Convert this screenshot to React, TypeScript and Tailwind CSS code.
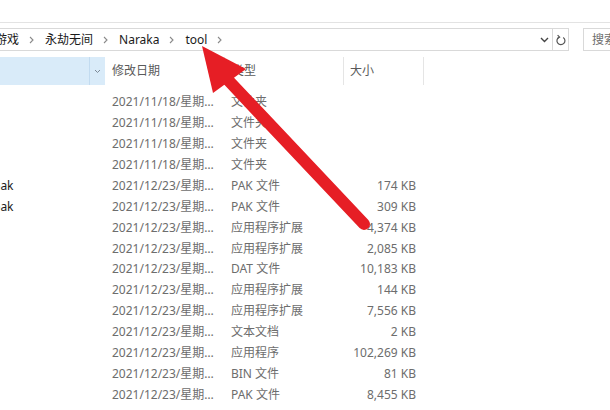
import React from "react";

const Chevron = () => (
  <svg width="5" height="8" viewBox="0 0 5 8" className="block">
    <path d="M1 1 L4 4 L1 7" fill="none" stroke="#8a8a8a" strokeWidth="1.1" />
  </svg>
);

const rows: [string, string, string, string][] = [
  ["", "2021/11/18/星期…", "文件夹", ""],
  ["", "2021/11/18/星期…", "文件夹", ""],
  ["", "2021/11/18/星期…", "文件夹", ""],
  ["", "2021/11/18/星期…", "文件夹", ""],
  ["pak", "2021/12/23/星期…", "PAK 文件", "174 KB"],
  ["pak", "2021/12/23/星期…", "PAK 文件", "309 KB"],
  ["", "2021/12/23/星期…", "应用程序扩展", "4,374 KB"],
  ["", "2021/12/23/星期…", "应用程序扩展", "2,085 KB"],
  ["", "2021/12/23/星期…", "DAT 文件", "10,183 KB"],
  ["", "2021/12/23/星期…", "应用程序扩展", "144 KB"],
  ["", "2021/12/23/星期…", "应用程序扩展", "7,556 KB"],
  ["", "2021/12/23/星期…", "文本文档", "2 KB"],
  ["", "2021/12/23/星期…", "应用程序", "102,269 KB"],
  ["", "2021/12/23/星期…", "BIN 文件", "81 KB"],
  ["", "2021/12/23/星期…", "PAK 文件", "8,455 KB"],
];

const crumbs = ["游戏", "永劫无间", "Naraka", "tool"];

export default function App() {
  return (
    <div
      className="relative w-[610px] h-[410px] overflow-hidden bg-white text-[12px]"
      style={{ fontFamily: '"Noto Sans", "Noto Sans CJK SC", sans-serif' }}
    >
      <div className="h-[23px] border-b border-[#e3e3e3]" />
      <div className="mt-[5px] flex h-[23px] items-stretch">
        <div className="ml-[-2px] flex w-[571px] shrink-0 items-stretch border border-[#d9d9d9]">
          <div className="flex flex-1 items-center overflow-hidden text-[#1a1a1a] leading-none">
            {crumbs.map((c, i) => (
              <React.Fragment key={c}>
                <span className={i === 0 ? "ml-[-4px] whitespace-nowrap" : "whitespace-nowrap"}>{c}</span>
                <span className="pl-[10px] pr-[11px]">
                  <Chevron />
                </span>
              </React.Fragment>
            ))}
          </div>
          <div className="flex w-[15px] items-center justify-center">
            <svg width="9" height="6" viewBox="0 0 9 6">
              <path d="M1 1 L4.5 4.5 L8 1" fill="none" stroke="#444" strokeWidth="1.4" />
            </svg>
          </div>
          <div className="flex w-[16px] items-center justify-center border-l border-[#d9d9d9]">
            <svg width="10" height="12" viewBox="0 0 10 12">
              <path d="M3 3.2 A4 4 0 1 0 7.2 3.4" fill="none" stroke="#555" strokeWidth="1.2" />
              <path d="M1.6 1.2 L3.6 3.2 L1.4 4.6" fill="none" stroke="#555" strokeWidth="1.2" />
            </svg>
          </div>
        </div>
        <div className="ml-[14px] flex w-[80px] shrink-0 items-center overflow-hidden border border-[#d9d9d9] pl-[8px] text-[#6d6d6d] whitespace-nowrap">
          搜索"tool"
        </div>
      </div>
      <div className="mt-[6px] flex h-[28px] items-stretch text-[#5a5a5a]">
        <div className="flex w-[105px] bg-[#d9ebf9]">
          <div className="w-[90px] border-r border-[#c2dbf0]" />
          <div className="flex flex-1 items-center justify-center">
            <svg width="7" height="5" viewBox="0 0 7 5">
              <path d="M1 1 L3.5 3.5 L6 1" fill="none" stroke="#7d8a97" strokeWidth="1" />
            </svg>
          </div>
        </div>
        <div className="flex w-[120px] items-center border-r border-[#e5e5e5] pl-[7px]">修改日期</div>
        <div className="flex w-[119px] items-center border-r border-[#e5e5e5] pl-[7px]">类型</div>
        <div className="flex w-[80px] items-center border-r border-[#e5e5e5] pl-[6px]">大小</div>
      </div>
      <div className="mt-[7px] flex flex-col">
        {rows.map((r, i) => (
          <div key={i} className="flex h-[20.88px] items-center text-[#6d6d6d] leading-none">
            <div className="w-[105px] overflow-hidden whitespace-nowrap text-[#1a1a1a]">
              {r[0] && <span className="ml-[-7px]">{r[0]}</span>}
            </div>
            <div className="w-[120px] whitespace-nowrap pl-[7px]">{r[1]}</div>
            <div className="w-[119px] whitespace-nowrap pl-[6px]">{r[2]}</div>
            <div className="w-[72px] text-right whitespace-nowrap">{r[3]}</div>
          </div>
        ))}
      </div>
      <svg className="pointer-events-none absolute left-0 top-0" width="610" height="410">
        <line x1="228" y1="80" x2="364" y2="224" stroke="#e61e25" strokeWidth="12" strokeLinecap="round" />
        <polygon points="202,46 213,93 246,69" fill="#e61e25" />
      </svg>
    </div>
  );
}
